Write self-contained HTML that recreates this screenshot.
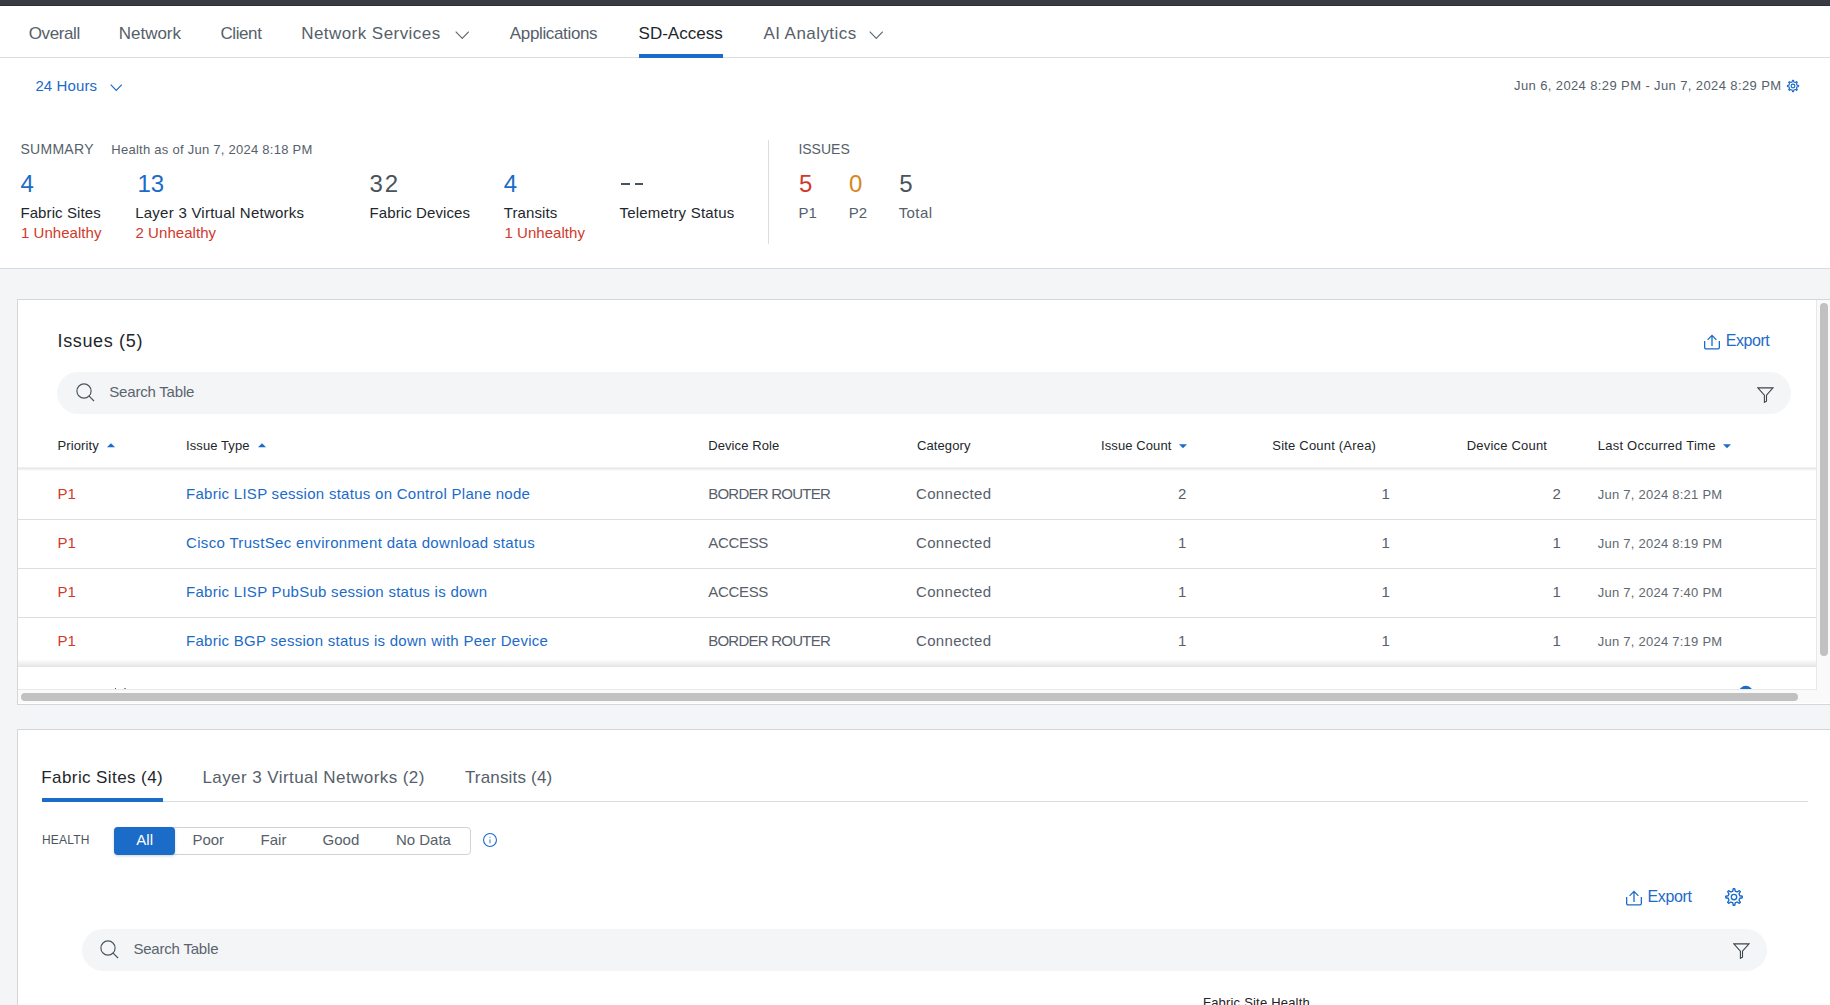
<!DOCTYPE html>
<html><head><meta charset="utf-8"><style>
html,body{margin:0;padding:0;width:1830px;height:1005px;overflow:hidden;background:#fff;font-family:"Liberation Sans",sans-serif;}
.t{position:absolute;white-space:nowrap;line-height:1;}
.r{position:absolute;}
</style></head><body>
<div class="r" style="left:0px;top:0px;width:1830px;height:5px;background:#383c42;"></div>
<div class="r" style="left:0px;top:5px;width:1830px;height:1px;background:#2a2d33;"></div>
<div class="t" style="left:28.80px;top:24.61px;font-size:17px;color:#56606a;letter-spacing:-0.4px;">Overall</div>
<div class="t" style="left:118.70px;top:24.61px;font-size:17px;color:#56606a;">Network</div>
<div class="t" style="left:220.40px;top:24.61px;font-size:17px;color:#56606a;letter-spacing:-0.4px;">Client</div>
<div class="t" style="left:301.20px;top:24.61px;font-size:17px;color:#56606a;letter-spacing:0.45px;">Network Services</div>
<div class="t" style="left:509.80px;top:24.61px;font-size:17px;color:#56606a;letter-spacing:-0.35px;">Applications</div>
<div class="t" style="left:763.40px;top:24.61px;font-size:17px;color:#56606a;letter-spacing:0.45px;">AI Analytics</div>
<div class="t" style="left:638.60px;top:24.61px;font-size:17px;color:#22272c;">SD-Access</div>
<svg class="r" style="left:454.8px;top:30.8px" width="14.5" height="8.5" viewBox="0 0 14.5 8.5"><polyline points="0.7,0.7 7.25,7.4 13.8,0.7" fill="none" stroke="#5b656f" stroke-width="1.1"/></svg>
<svg class="r" style="left:868.8px;top:30.8px" width="14.5" height="8.5" viewBox="0 0 14.5 8.5"><polyline points="0.7,0.7 7.25,7.4 13.8,0.7" fill="none" stroke="#5b656f" stroke-width="1.1"/></svg>
<div class="r" style="left:0px;top:57px;width:1830px;height:1px;background:#dadde1;"></div>
<div class="r" style="left:639px;top:54px;width:84px;height:4px;background:#1b6bc8;"></div>
<div class="t" style="left:35.40px;top:78.30px;font-size:15px;color:#1b6bc8;letter-spacing:0.12px;">24 Hours</div>
<svg class="r" style="left:109.5px;top:84px" width="12.5" height="7.5" viewBox="0 0 12.5 7.5"><polyline points="0.7,0.7 6.25,6.4 11.8,0.7" fill="none" stroke="#1b6bc8" stroke-width="1.2"/></svg>
<div class="t" style="left:1514.00px;top:79.10px;font-size:13px;color:#56606a;letter-spacing:0.39px;">Jun 6, 2024 8:29 PM - Jun 7, 2024 8:29 PM</div>
<svg class="r" style="left:1784px;top:77px" width="18" height="18" viewBox="0 0 18 18"><path d="M7.43 5.21 L8.11 5.00 L8.51 3.42 L9.49 3.42 L9.89 5.00 L10.57 5.21 L11.20 5.54 L12.60 4.71 L13.29 5.40 L12.46 6.80 L12.79 7.43 L13.00 8.11 L14.58 8.51 L14.58 9.49 L13.00 9.89 L12.79 10.57 L12.46 11.20 L13.29 12.60 L12.60 13.29 L11.20 12.46 L10.57 12.79 L9.89 13.00 L9.49 14.58 L8.51 14.58 L8.11 13.00 L7.43 12.79 L6.80 12.46 L5.40 13.29 L4.71 12.60 L5.54 11.20 L5.21 10.57 L5.00 9.89 L3.42 9.49 L3.42 8.51 L5.00 8.11 L5.21 7.43 L5.54 6.80 L4.71 5.40 L5.40 4.71 L6.80 5.54Z" fill="none" stroke="#1b6bc8" stroke-width="1.15" stroke-linejoin="round"/><circle cx="9.0" cy="9.0" r="1.9" fill="none" stroke="#1b6bc8" stroke-width="1.15"/></svg>
<div class="t" style="left:20.40px;top:142.15px;font-size:14px;color:#56606a;letter-spacing:0.3px;">SUMMARY</div>
<div class="t" style="left:111.30px;top:143.00px;font-size:13px;color:#56606a;letter-spacing:0.26px;">Health as of Jun 7, 2024 8:18 PM</div>
<div class="t" style="left:20.40px;top:171.68px;font-size:24px;color:#1b6bc8;">4</div>
<div class="t" style="left:137.50px;top:171.68px;font-size:24px;color:#1b6bc8;">13</div>
<div class="t" style="left:503.70px;top:171.68px;font-size:24px;color:#1b6bc8;">4</div>
<div class="t" style="left:369.50px;top:171.68px;font-size:24px;color:#4a535c;letter-spacing:1.8px;">32</div>
<div class="r" style="left:621px;top:183px;width:9px;height:2px;background:#4a535c;"></div>
<div class="r" style="left:635px;top:183px;width:8px;height:2px;background:#4a535c;"></div>
<div class="t" style="left:20.40px;top:204.80px;font-size:15px;color:#22272c;letter-spacing:0.1px;">Fabric Sites</div>
<div class="t" style="left:135.20px;top:204.80px;font-size:15px;color:#22272c;letter-spacing:0.25px;">Layer 3 Virtual Networks</div>
<div class="t" style="left:369.50px;top:204.80px;font-size:15px;color:#22272c;letter-spacing:0.1px;">Fabric Devices</div>
<div class="t" style="left:503.80px;top:204.80px;font-size:15px;color:#22272c;letter-spacing:0.1px;">Transits</div>
<div class="t" style="left:619.50px;top:204.80px;font-size:15px;color:#22272c;letter-spacing:0.2px;">Telemetry Status</div>
<div class="t" style="left:20.90px;top:225.10px;font-size:15px;color:#d0392c;letter-spacing:0.05px;">1 Unhealthy</div>
<div class="t" style="left:135.50px;top:225.10px;font-size:15px;color:#d0392c;letter-spacing:0.05px;">2 Unhealthy</div>
<div class="t" style="left:504.40px;top:225.10px;font-size:15px;color:#d0392c;letter-spacing:0.05px;">1 Unhealthy</div>
<div class="r" style="left:768px;top:140px;width:1px;height:104px;background:#dadde1;"></div>
<div class="t" style="left:798.40px;top:142.15px;font-size:14px;color:#56606a;">ISSUES</div>
<div class="t" style="left:799.00px;top:171.68px;font-size:24px;color:#d0392c;">5</div>
<div class="t" style="left:849.00px;top:171.68px;font-size:24px;color:#d8861c;">0</div>
<div class="t" style="left:899.30px;top:171.68px;font-size:24px;color:#4a535c;">5</div>
<div class="t" style="left:798.60px;top:205.30px;font-size:15px;color:#56606a;">P1</div>
<div class="t" style="left:848.80px;top:205.30px;font-size:15px;color:#56606a;">P2</div>
<div class="t" style="left:898.70px;top:205.30px;font-size:15px;color:#56606a;letter-spacing:0.4px;">Total</div>
<div class="r" style="left:0px;top:268px;width:1830px;height:1px;background:#d7dade;"></div>
<div class="r" style="left:0px;top:269px;width:1830px;height:736px;background:#f4f5f7;"></div>
<div class="r" style="left:17px;top:299px;width:1813px;height:406px;background:#fff;border-top:1px solid #d3d6da;border-left:1px solid #d3d6da;border-bottom:1px solid #d3d6da;box-sizing:border-box;"></div>
<div class="t" style="left:57.50px;top:332.06px;font-size:18px;color:#22272c;letter-spacing:0.65px;">Issues (5)</div>
<svg class="r" style="left:1703px;top:334px" width="18" height="16" viewBox="0 0 18 16"><path d="M1.65 7v6.6a1.3 1.3 0 0 0 1.3 1.3h12.1a1.3 1.3 0 0 0 1.3-1.3V7" fill="none" stroke="#1b6bc8" stroke-width="1.3"/><path d="M9 12V1.6M4.6 5.9L9 1.4l4.4 4.5" fill="none" stroke="#1b6bc8" stroke-width="1.3"/></svg>
<div class="t" style="left:1725.80px;top:333.36px;font-size:16px;color:#1b6bc8;letter-spacing:-0.45px;">Export</div>
<div class="r" style="left:57px;top:372px;width:1734px;height:42px;background:#f4f5f7;border-radius:21.0px;"></div>
<svg class="r" style="left:75.5px;top:383px" width="20" height="20" viewBox="0 0 20 20"><circle cx="8" cy="8" r="7.1" fill="none" stroke="#4a545d" stroke-width="1.15"/><path d="M13.1 13.1l4.9 4.9" stroke="#4a545d" stroke-width="1.2"/></svg>
<div class="t" style="left:109.30px;top:384.30px;font-size:15px;color:#5b646d;letter-spacing:-0.2px;">Search Table</div>
<svg class="r" style="left:1757px;top:387px" width="17" height="16" viewBox="0 0 17 16"><path d="M0.8 0.9h15.2L9.5 8.2v6l-2.1 1.1V8.2z" fill="none" stroke="#3c444c" stroke-width="1.1" stroke-linejoin="miter"/></svg>
<div class="t" style="left:57.50px;top:439.30px;font-size:13px;color:#22272c;letter-spacing:0.1px;">Priority</div>
<div class="t" style="left:186.00px;top:439.30px;font-size:13px;color:#22272c;letter-spacing:0.1px;">Issue Type</div>
<div class="t" style="left:708.20px;top:439.30px;font-size:13px;color:#22272c;letter-spacing:0.1px;">Device Role</div>
<div class="t" style="left:917.00px;top:439.30px;font-size:13px;color:#22272c;letter-spacing:0.1px;">Category</div>
<div class="t" style="left:1101.00px;top:439.30px;font-size:13px;color:#22272c;letter-spacing:0.1px;">Issue Count</div>
<div class="t" style="left:1272.30px;top:439.30px;font-size:13px;color:#22272c;letter-spacing:0.2px;">Site Count (Area)</div>
<div class="t" style="left:1466.70px;top:439.30px;font-size:13px;color:#22272c;letter-spacing:0.2px;">Device Count</div>
<div class="t" style="left:1597.70px;top:439.30px;font-size:13px;color:#22272c;letter-spacing:0.25px;">Last Occurred Time</div>
<svg class="r" style="left:107px;top:443.2px" width="8" height="4.5" viewBox="0 0 8 4.5"><path d="M0 4.3L4 0.2 8 4.3z" fill="#1b6bc8"/></svg>
<svg class="r" style="left:258px;top:443.2px" width="8" height="4.5" viewBox="0 0 8 4.5"><path d="M0 4.3L4 0.2 8 4.3z" fill="#1b6bc8"/></svg>
<svg class="r" style="left:1179.3px;top:444px" width="8" height="4.5" viewBox="0 0 8 4.5"><path d="M0 0.2L4 4.3 8 0.2z" fill="#1b6bc8"/></svg>
<svg class="r" style="left:1723px;top:444px" width="8" height="4.5" viewBox="0 0 8 4.5"><path d="M0 0.2L4 4.3 8 0.2z" fill="#1b6bc8"/></svg>
<div class="r" style="left:18px;top:467px;width:1798px;height:1px;background:#f0f0f0;"></div>
<div class="r" style="left:18px;top:468px;width:1798px;height:1px;background:#e9e9e9;"></div>
<div class="r" style="left:18px;top:469px;width:1798px;height:1px;background:#f3f3f3;"></div>
<div class="r" style="left:18px;top:470px;width:1798px;height:1px;background:#fafafa;"></div>
<div class="t" style="left:57.50px;top:485.60px;font-size:15px;color:#d0392c;letter-spacing:0.1px;">P1</div>
<div class="t" style="left:186.00px;top:485.60px;font-size:15px;color:#1b6bc8;letter-spacing:0.28px;">Fabric LISP session status on Control Plane node</div>
<div class="t" style="left:708.20px;top:485.60px;font-size:15px;color:#57606a;letter-spacing:-0.75px;">BORDER ROUTER</div>
<div class="t" style="left:916.10px;top:485.60px;font-size:15px;color:#57606a;letter-spacing:0.3px;">Connected</div>
<div class="t" style="left:1178.00px;top:485.60px;font-size:15px;color:#57606a;">2</div>
<div class="t" style="left:1381.50px;top:485.60px;font-size:15px;color:#57606a;">1</div>
<div class="t" style="left:1552.50px;top:485.60px;font-size:15px;color:#57606a;">2</div>
<div class="t" style="left:1597.70px;top:488.20px;font-size:13px;color:#5f6871;letter-spacing:0.25px;">Jun 7, 2024 8:21 PM</div>
<div class="r" style="left:18px;top:519px;width:1798px;height:1px;background:#dcdee1;"></div>
<div class="t" style="left:57.50px;top:534.60px;font-size:15px;color:#d0392c;letter-spacing:0.1px;">P1</div>
<div class="t" style="left:186.00px;top:534.60px;font-size:15px;color:#1b6bc8;letter-spacing:0.33px;">Cisco TrustSec environment data download status</div>
<div class="t" style="left:708.20px;top:534.60px;font-size:15px;color:#57606a;letter-spacing:-0.3px;">ACCESS</div>
<div class="t" style="left:916.10px;top:534.60px;font-size:15px;color:#57606a;letter-spacing:0.3px;">Connected</div>
<div class="t" style="left:1178.00px;top:534.60px;font-size:15px;color:#57606a;">1</div>
<div class="t" style="left:1381.50px;top:534.60px;font-size:15px;color:#57606a;">1</div>
<div class="t" style="left:1552.50px;top:534.60px;font-size:15px;color:#57606a;">1</div>
<div class="t" style="left:1597.70px;top:537.20px;font-size:13px;color:#5f6871;letter-spacing:0.25px;">Jun 7, 2024 8:19 PM</div>
<div class="r" style="left:18px;top:568px;width:1798px;height:1px;background:#dcdee1;"></div>
<div class="t" style="left:57.50px;top:583.60px;font-size:15px;color:#d0392c;letter-spacing:0.1px;">P1</div>
<div class="t" style="left:186.00px;top:583.60px;font-size:15px;color:#1b6bc8;letter-spacing:0.28px;">Fabric LISP PubSub session status is down</div>
<div class="t" style="left:708.20px;top:583.60px;font-size:15px;color:#57606a;letter-spacing:-0.3px;">ACCESS</div>
<div class="t" style="left:916.10px;top:583.60px;font-size:15px;color:#57606a;letter-spacing:0.3px;">Connected</div>
<div class="t" style="left:1178.00px;top:583.60px;font-size:15px;color:#57606a;">1</div>
<div class="t" style="left:1381.50px;top:583.60px;font-size:15px;color:#57606a;">1</div>
<div class="t" style="left:1552.50px;top:583.60px;font-size:15px;color:#57606a;">1</div>
<div class="t" style="left:1597.70px;top:586.20px;font-size:13px;color:#5f6871;letter-spacing:0.25px;">Jun 7, 2024 7:40 PM</div>
<div class="r" style="left:18px;top:617px;width:1798px;height:1px;background:#dcdee1;"></div>
<div class="t" style="left:57.50px;top:632.60px;font-size:15px;color:#d0392c;letter-spacing:0.1px;">P1</div>
<div class="t" style="left:186.00px;top:632.60px;font-size:15px;color:#1b6bc8;letter-spacing:0.28px;">Fabric BGP session status is down with Peer Device</div>
<div class="t" style="left:708.20px;top:632.60px;font-size:15px;color:#57606a;letter-spacing:-0.75px;">BORDER ROUTER</div>
<div class="t" style="left:916.10px;top:632.60px;font-size:15px;color:#57606a;letter-spacing:0.3px;">Connected</div>
<div class="t" style="left:1178.00px;top:632.60px;font-size:15px;color:#57606a;">1</div>
<div class="t" style="left:1381.50px;top:632.60px;font-size:15px;color:#57606a;">1</div>
<div class="t" style="left:1552.50px;top:632.60px;font-size:15px;color:#57606a;">1</div>
<div class="t" style="left:1597.70px;top:635.20px;font-size:13px;color:#5f6871;letter-spacing:0.25px;">Jun 7, 2024 7:19 PM</div>
<div class="r" style="left:18px;top:659px;width:1798px;height:7px;background:linear-gradient(#fff,#e8e8e8);"></div>
<div class="r" style="left:18px;top:666px;width:1798px;height:1px;background:#e6e6e6;"></div>
<div class="r" style="left:18px;top:689px;width:1798px;height:1px;background:#e8e9eb;"></div>
<svg class="r" style="left:1737px;top:685px" width="18" height="4" viewBox="0 0 18 4"><circle cx="8.8" cy="8" r="7.2" fill="#1b6bc8"/></svg>
<div class="r" style="left:115px;top:688px;width:1px;height:1px;background:#5a626a;"></div>
<div class="r" style="left:124px;top:688px;width:2px;height:1px;background:#8a9096;"></div>
<div class="r" style="left:18px;top:690px;width:1812px;height:13px;background:#fafafa;"></div>
<div class="r" style="left:1816px;top:300px;width:14px;height:390px;background:#fafafa;border-left:1px solid #e8e8e8;box-sizing:border-box;"></div>
<div class="r" style="left:1820px;top:303px;width:8px;height:353px;background:#c1c1c1;border-radius:4px;"></div>
<div class="r" style="left:21px;top:693px;width:1777px;height:8px;background:#c1c1c1;border-radius:4px;"></div>
<div class="r" style="left:17px;top:729px;width:1813px;height:276px;background:#fff;border-top:1px solid #d3d6da;border-left:1px solid #d3d6da;box-sizing:border-box;"></div>
<div class="t" style="left:41.30px;top:768.51px;font-size:17px;color:#22272c;letter-spacing:0.41px;">Fabric Sites (4)</div>
<div class="t" style="left:202.40px;top:768.51px;font-size:17px;color:#56606a;letter-spacing:0.43px;">Layer 3 Virtual Networks (2)</div>
<div class="t" style="left:464.90px;top:768.51px;font-size:17px;color:#56606a;letter-spacing:0.18px;">Transits (4)</div>
<div class="r" style="left:42px;top:801px;width:1766px;height:1px;background:#dadde1;"></div>
<div class="r" style="left:42px;top:798px;width:121px;height:4px;background:#1b6bc8;"></div>
<div class="t" style="left:42.00px;top:833.84px;font-size:12px;color:#4b545d;letter-spacing:0.2px;">HEALTH</div>
<div class="r" style="left:114px;top:827px;width:357px;height:28px;background:#fff;border:1px solid #cfd3d8;border-radius:4px;box-sizing:border-box;"></div>
<div class="r" style="left:114px;top:827px;width:61px;height:28px;background:#1b6bc8;border-radius:4px;box-shadow:0 1px 3px rgba(0,0,0,0.18);"></div>
<div class="t" style="left:136.30px;top:832.10px;font-size:15px;color:#fff;">All</div>
<div class="t" style="left:192.40px;top:832.10px;font-size:15px;color:#57606a;">Poor</div>
<div class="t" style="left:260.60px;top:832.10px;font-size:15px;color:#57606a;">Fair</div>
<div class="t" style="left:322.60px;top:832.10px;font-size:15px;color:#57606a;">Good</div>
<div class="t" style="left:395.90px;top:832.10px;font-size:15px;color:#57606a;">No Data</div>
<svg class="r" style="left:483px;top:833px" width="14" height="14" viewBox="0 0 14 14"><circle cx="7" cy="7" r="6.45" fill="none" stroke="#1b6bc8" stroke-width="1.1"/><rect x="6.35" y="6.3" width="1.3" height="3.9" fill="#1b6bc8" opacity="0.7"/><rect x="6.35" y="3.7" width="1.3" height="1.2" fill="#1b6bc8" opacity="0.6"/></svg>
<svg class="r" style="left:1625px;top:890px" width="18" height="16" viewBox="0 0 18 16"><path d="M1.65 7v6.6a1.3 1.3 0 0 0 1.3 1.3h12.1a1.3 1.3 0 0 0 1.3-1.3V7" fill="none" stroke="#1b6bc8" stroke-width="1.3"/><path d="M9 12V1.6M4.6 5.9L9 1.4l4.4 4.5" fill="none" stroke="#1b6bc8" stroke-width="1.3"/></svg>
<div class="t" style="left:1647.50px;top:889.26px;font-size:16px;color:#1b6bc8;letter-spacing:-0.35px;">Export</div>
<svg class="r" style="left:1722px;top:885px" width="24" height="24" viewBox="0 0 24 24"><path d="M9.74 6.55 L10.72 6.24 L11.28 3.73 L12.72 3.73 L13.28 6.24 L14.26 6.55 L15.17 7.02 L17.34 5.64 L18.36 6.66 L16.98 8.83 L17.45 9.74 L17.76 10.72 L20.27 11.28 L20.27 12.72 L17.76 13.28 L17.45 14.26 L16.98 15.17 L18.36 17.34 L17.34 18.36 L15.17 16.98 L14.26 17.45 L13.28 17.76 L12.72 20.27 L11.28 20.27 L10.72 17.76 L9.74 17.45 L8.83 16.98 L6.66 18.36 L5.64 17.34 L7.02 15.17 L6.55 14.26 L6.24 13.28 L3.73 12.72 L3.73 11.28 L6.24 10.72 L6.55 9.74 L7.02 8.83 L5.64 6.66 L6.66 5.64 L8.83 7.02Z" fill="none" stroke="#1b6bc8" stroke-width="1.35" stroke-linejoin="round"/><circle cx="12.0" cy="12.0" r="2.7" fill="none" stroke="#1b6bc8" stroke-width="1.35"/></svg>
<div class="r" style="left:82px;top:929px;width:1685px;height:42px;background:#f4f5f7;border-radius:21.0px;"></div>
<svg class="r" style="left:100px;top:940px" width="20" height="20" viewBox="0 0 20 20"><circle cx="8" cy="8" r="7.1" fill="none" stroke="#4a545d" stroke-width="1.15"/><path d="M13.1 13.1l4.9 4.9" stroke="#4a545d" stroke-width="1.2"/></svg>
<div class="t" style="left:133.40px;top:941.30px;font-size:15px;color:#5b646d;letter-spacing:-0.2px;">Search Table</div>
<svg class="r" style="left:1733px;top:942.6px" width="17" height="16" viewBox="0 0 17 16"><path d="M0.8 0.9h15.2L9.5 8.2v6l-2.1 1.1V8.2z" fill="none" stroke="#3c444c" stroke-width="1.1" stroke-linejoin="miter"/></svg>
<div class="t" style="left:1203.00px;top:996.30px;font-size:13px;color:#1f2226;letter-spacing:0.2px;">Fabric Site Health</div>
</body></html>
